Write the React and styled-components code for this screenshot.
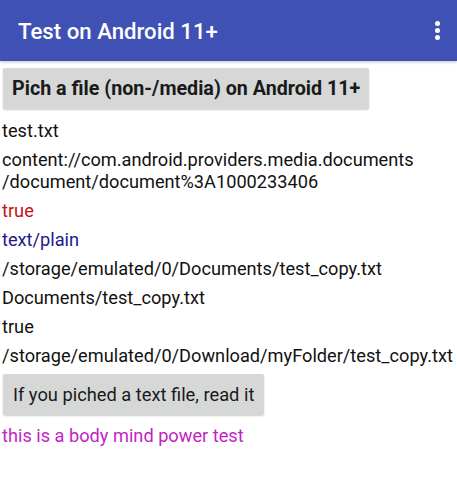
import React from "react";
import styled, { createGlobalStyle } from "styled-components";

const GlobalStyle = createGlobalStyle`
  body {
    margin: 0;
    background: #ffffff;
    font-family: Roboto, "Liberation Sans", sans-serif;
  }
`;

const Page = styled.div`
  width: 457px;
  min-height: 500px;
  background: #fff;
`;

const AppBar = styled.header`
  height: 61px;
  background: #3f51b5;
  display: flex;
  align-items: center;
  justify-content: space-between;
  padding: 0 17px 0 18px;
  box-sizing: border-box;
  box-shadow: 0 1px 3px rgba(0, 0, 0, 0.25);
`;

const Title = styled.h1`
  margin: 0;
  font-size: 22.2px;
  font-weight: 500;
  color: #fff;
`;

const MenuDots = styled.div`
  display: flex;
  flex-direction: column;
  gap: 2px;
  span {
    width: 5px;
    height: 5px;
    border-radius: 50%;
    background: #fff;
  }
`;

const Content = styled.main`
  padding: 7px 3px 0 2px;
  display: flex;
  flex-direction: column;
  align-items: flex-start;
`;

const Button = styled.button`
  background: #d6d7d7;
  border: none;
  border-radius: 2px;
  box-shadow: 0 1px 2px rgba(0, 0, 0, 0.2);
  height: 41px;
  padding: 0 ${(p) => (p.$bold ? "9px" : "10px")};
  font-family: Roboto, "Liberation Sans", sans-serif;
  font-size: ${(p) => (p.$bold ? "19.7px" : "18.3px")};
  font-weight: ${(p) => (p.$bold ? 700 : 400)};
  color: #1a1a1a;
  margin: 0 0 ${(p) => p.$after}px 1px;
`;

const Line = styled.p`
  margin: 0 0 7px;
  font-size: 18.2px;
  line-height: 22px;
  color: ${(p) => p.$color || "#111"};
`;

export default function App() {
  return (
    <Page>
      <GlobalStyle />
      <AppBar>
        <Title>Test on Android 11+</Title>
        <MenuDots>
          <span />
          <span />
          <span />
        </MenuDots>
      </AppBar>
      <Content>
        <Button $bold $after={11}>Pich a file (non-/media) on Android 11+</Button>
        <Line>test.txt</Line>
        <Line>
          content://com.android.providers.media.documents
          <br />
          /document/document%3A1000233406
        </Line>
        <Line $color="#c0161a">true</Line>
        <Line $color="#1a1a8c">text/plain</Line>
        <Line>/storage/emulated/0/Documents/test_copy.txt</Line>
        <Line>Documents/test_copy.txt</Line>
        <Line>true</Line>
        <Line>/storage/emulated/0/Download/myFolder/test_copy.txt</Line>
        <Button $after={10}>If you piched a text file, read it</Button>
        <Line $color="#c21fc4">this is a body mind power test</Line>
      </Content>
    </Page>
  );
}
